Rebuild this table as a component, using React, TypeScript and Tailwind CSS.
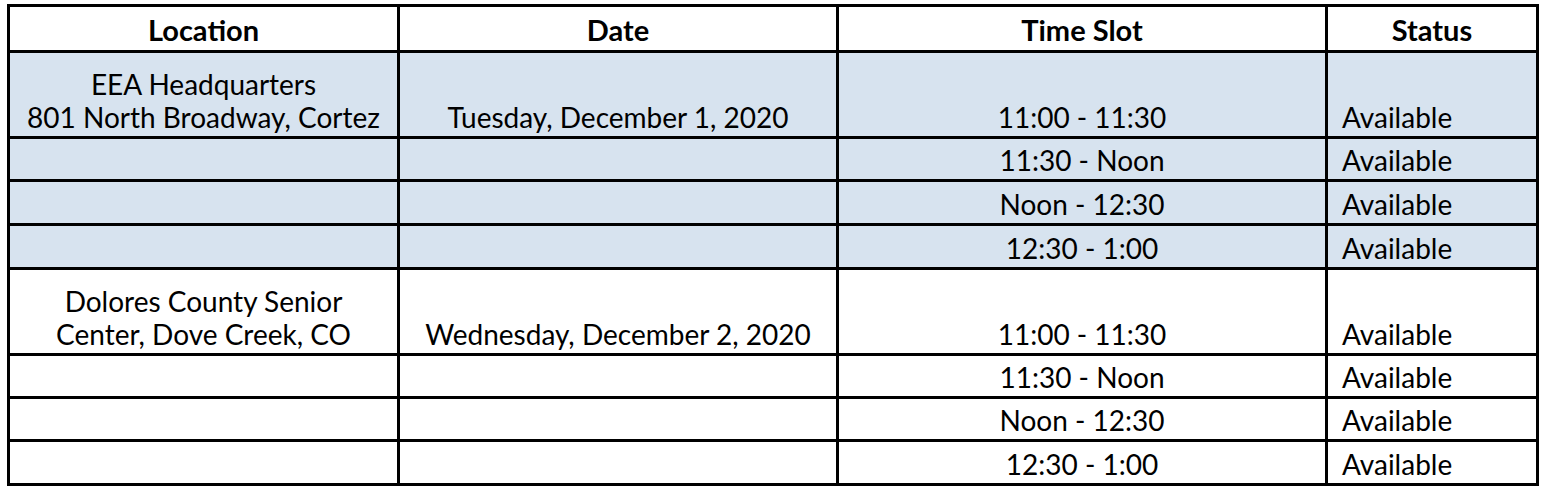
import React from 'react';

type Row = {
  location?: string[];
  date?: string;
  slot: string;
  status: string;
  h: string;
  shaded: boolean;
};

const rows: Row[] = [
  { location: ['EEA Headquarters', '801 North Broadway, Cortez'], date: 'Tuesday, December 1, 2020', slot: '11:00 - 11:30', status: 'Available', h: 'h-[86px]', shaded: true },
  { slot: '11:30 - Noon', status: 'Available', h: 'h-[43px]', shaded: true },
  { slot: 'Noon - 12:30', status: 'Available', h: 'h-[44px]', shaded: true },
  { slot: '12:30 - 1:00', status: 'Available', h: 'h-[44px]', shaded: true },
  { location: ['Dolores County Senior', 'Center, Dove Creek, CO'], date: 'Wednesday, December 2, 2020', slot: '11:00 - 11:30', status: 'Available', h: 'h-[86px]', shaded: false },
  { slot: '11:30 - Noon', status: 'Available', h: 'h-[43px]', shaded: false },
  { slot: 'Noon - 12:30', status: 'Available', h: 'h-[43px]', shaded: false },
  { slot: '12:30 - 1:00', status: 'Available', h: 'h-[44px]', shaded: false },
];

// shared cell borders and type; alignment is set per cell
const cell = 'flex border-r-[3px] border-b-[3px] border-black leading-[33px]';

export default function App() {
  return (
    <div className="min-h-[500px] bg-white pl-[7px] pt-[4px] text-black font-['Lato',sans-serif] text-[28px]">
      <div className="w-fit border-l-[3px] border-t-[3px] border-black">
        {/* Header */}
        <div className="grid h-[46px] grid-cols-[390px_439px_489px_211px] text-[29px] font-bold">
          <div className={`${cell} items-end justify-center pb-[4px]`}>Location</div>
          <div className={`${cell} items-end justify-center pb-[4px]`}>Date</div>
          <div className={`${cell} items-end justify-center pb-[4px]`}>Time Slot</div>
          <div className={`${cell} items-end justify-center pb-[4px]`}>Status</div>
        </div>

        {rows.map((r, i) => (
          <div
            key={i}
            className={`grid grid-cols-[390px_439px_489px_211px] ${r.h} ${r.shaded ? 'bg-[#d7e3ef]' : 'bg-white'}`}
          >
            <div className={`${cell} flex-col items-center justify-end pb-[2px] text-center`}>
              {r.location?.map((line) => (
                <span key={line}>{line}</span>
              ))}
            </div>
            <div className={`${cell} items-end justify-center pb-[2px]`}>{r.date}</div>
            <div className={`${cell} items-end justify-center pb-[2px]`}>{r.slot}</div>
            <div className={`${cell} items-end pb-[2px] pl-[14px]`}>{r.status}</div>
          </div>
        ))}
      </div>
    </div>
  );
}
